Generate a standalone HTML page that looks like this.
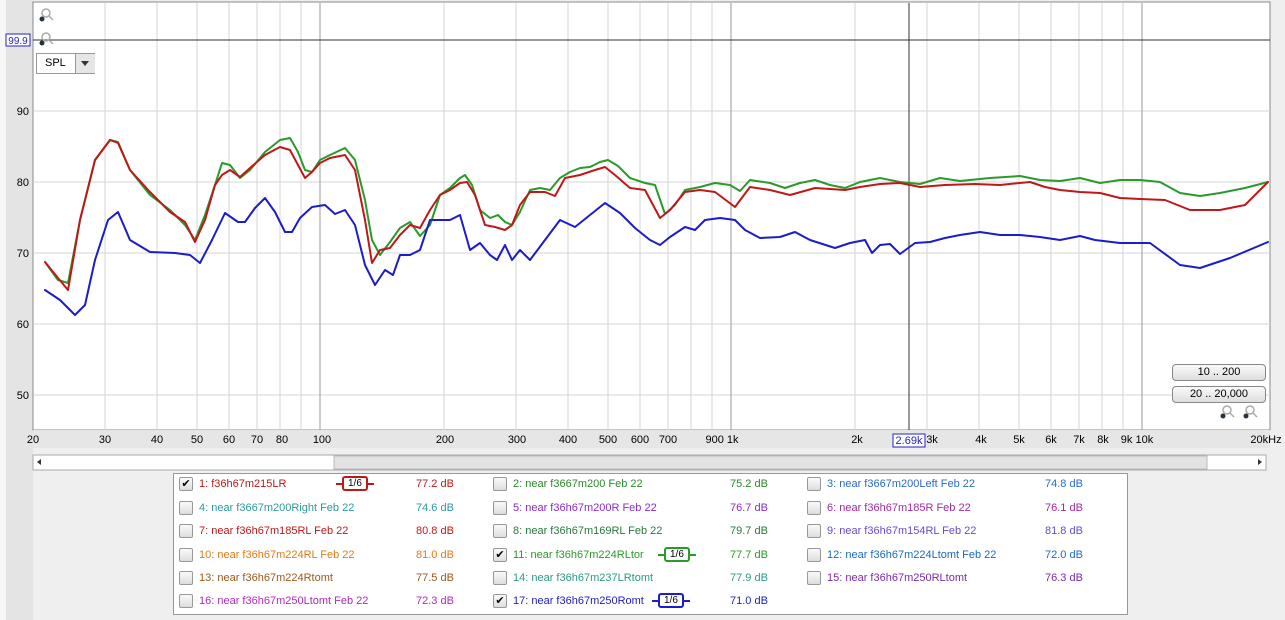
<!DOCTYPE html>
<html><head><meta charset="utf-8"><style>
body{margin:0;width:1285px;height:620px;overflow:hidden;background:#efefef;font-family:"Liberation Sans",sans-serif;font-size:11px;position:relative}
.a{position:absolute}
.lg{position:absolute;left:173px;top:473px;width:953px;height:140px;background:#fff;border:1px solid #999}
.r{position:absolute;white-space:nowrap;font-size:11px}
.cb{position:absolute;width:12px;height:12px;border:1px solid #999;border-radius:2px;background:linear-gradient(#fafafa,#ddd);font-size:11px;line-height:12px;text-align:center;color:#000}
.btn{position:absolute;left:1172px;width:92px;height:15px;border:1px solid #888;border-radius:4px;background:linear-gradient(#fafafa,#ddd);text-align:center;font-size:11px;line-height:15px}
.six{display:inline-block;border:2px solid;border-radius:3px;padding:0 4px;font-size:10px;line-height:11px;position:relative;color:#000}
.six:before,.six:after{content:"";position:absolute;top:5px;width:6px;border-top:2px solid;border-color:inherit}
.six:before{left:-8px}.six:after{right:-8px}
</style></head><body>
<div class="a" style="left:0;top:0;width:33px;height:620px;background:#e4e4e4"></div>
<div class="a" style="left:0;top:0;width:6px;height:620px;background:#f7f7f7"></div>
<svg class="a" style="left:0;top:0" width="1285" height="620">
<rect x="33" y="2" width="1237" height="428" fill="#fff" stroke="#888"/>
<g stroke="#d6d6d6" stroke-width="1">
<path d="M105 3V430M157 3V430M197 3V430M229 3V430M257 3V430M280 3V430M301 3V430M444 3V430M516 3V430M568 3V430M608 3V430M640 3V430M668 3V430M691 3V430M712 3V430M855 3V430M927 3V430M979 3V430M1019 3V430M1051 3V430M1079 3V430M1102 3V430M1123 3V430"/>
<path d="M33 111H1270M33 182H1270M33 253H1270M33 324H1270M33 395H1270"/>
</g>
<path d="M320 3V430M731 3V430M1142 3V430" stroke="#999"/>
<path d="M33 40H1270M909 3V430" stroke="#333"/>
<rect x="33" y="430" width="1237" height="18" fill="#e6e6e6"/>
<g fill="none" stroke-width="2" stroke-linejoin="round" stroke-linecap="round">
<polyline stroke="#2a9a2a" points="45,262 58,280 68,283 80,220 95,160 110,140 118,142 130,170 150,195 170,210 185,225 195,240 205,215 215,185 222,163 230,165 240,178 250,170 265,152 280,140 290,138 298,152 305,170 312,172 320,160 330,155 345,148 355,160 365,200 372,240 380,255 390,242 400,228 410,222 420,236 430,225 440,195 450,188 460,178 465,175 472,185 480,210 490,218 498,215 505,222 512,225 520,212 530,190 540,188 550,190 560,178 570,172 580,168 590,167 600,162 608,160 618,166 630,178 645,183 655,185 665,214 675,205 685,190 700,187 715,183 730,185 740,191 750,180 770,183 785,188 800,183 815,180 830,185 845,188 860,182 880,178 900,182 920,184 940,178 960,181 990,178 1020,176 1040,180 1060,181 1080,178 1100,183 1120,180 1140,180 1160,182 1180,193 1200,196 1220,193 1245,188 1268,182"/>
<polyline stroke="#c01818" points="45,262 58,278 68,290 80,220 95,160 110,140 118,143 130,170 150,192 170,212 185,222 195,242 205,220 215,185 222,175 230,170 240,177 250,168 265,155 280,147 290,150 298,165 305,178 312,172 320,163 330,158 345,155 355,170 365,220 372,263 380,250 390,248 400,235 410,225 420,228 430,210 440,195 450,190 460,183 467,182 475,195 485,225 495,227 505,230 512,225 520,205 530,192 545,192 555,196 565,178 580,175 595,170 605,167 615,175 630,188 645,190 660,218 670,210 685,192 700,190 715,192 735,207 750,187 770,190 790,195 815,188 845,190 860,187 880,184 900,183 920,187 945,185 975,184 1000,185 1030,182 1045,187 1060,190 1080,192 1100,193 1120,198 1140,199 1165,200 1190,210 1200,210 1220,210 1245,205 1268,182"/>
<polyline stroke="#1c1cc8" points="45,290 60,300 75,315 85,305 95,260 108,220 118,212 130,240 150,252 175,253 190,255 200,263 212,240 225,213 238,222 245,222 255,208 265,198 275,212 285,232 292,232 300,218 312,207 325,205 335,214 345,210 355,225 365,265 375,285 385,270 393,275 400,255 410,255 420,250 430,220 440,220 450,220 460,215 470,250 480,243 490,255 497,260 505,245 512,260 520,250 530,260 545,240 560,220 575,227 590,215 605,203 620,213 635,228 650,240 660,245 670,237 685,227 695,230 705,220 720,218 735,220 745,230 760,238 780,237 795,232 810,240 835,248 850,243 865,240 872,253 880,245 890,244 900,254 915,243 930,242 945,238 960,235 980,232 1000,235 1020,235 1040,237 1060,240 1080,236 1095,240 1120,243 1150,243 1180,265 1200,268 1230,258 1268,242"/>
</g>
<g font-family="Liberation Sans" font-size="11" fill="#000" text-anchor="end">
<text x="29" y="115">90</text><text x="29" y="186">80</text><text x="29" y="257">70</text><text x="29" y="328">60</text><text x="29" y="399">50</text>
</g>
<g font-family="Liberation Sans" font-size="11" fill="#000" text-anchor="middle">
<text x="33" y="443">20</text><text x="105" y="443">30</text><text x="157" y="443">40</text><text x="197" y="443">50</text><text x="229" y="443">60</text><text x="257" y="443">70</text><text x="282" y="443">80</text><text x="322" y="443">100</text><text x="445" y="443">200</text><text x="517" y="443">300</text><text x="568" y="443">400</text><text x="608" y="443">500</text><text x="640" y="443">600</text><text x="668" y="443">700</text><text x="722" y="443">900 1k</text><text x="857" y="443">2k</text><text x="932" y="443">3k</text><text x="981" y="443">4k</text><text x="1019" y="443">5k</text><text x="1051" y="443">6k</text><text x="1079" y="443">7k</text><text x="1103" y="443">8k</text><text x="1137" y="443">9k 10k</text><text x="1266" y="443">20kHz</text>
</g>
<rect x="893" y="434" width="32" height="13" fill="#fff" stroke="#22c"/>
<text x="909" y="444" font-family="Liberation Sans" font-size="11" fill="#22c" text-anchor="middle">2.69k</text>
<rect x="6" y="34" width="24" height="12" fill="#fff" stroke="#22c"/>
<text x="18" y="44" font-family="Liberation Sans" font-size="10" fill="#22c" text-anchor="middle">99.9</text>
<g fill="none" stroke="#aaa" stroke-width="1.5">
<circle cx="46" cy="13" r="4"/><path d="M49 16l4 4"/>
<circle cx="46" cy="37" r="4"/><path d="M49 40l4 4"/>
<circle cx="1227" cy="410" r="4"/><path d="M1230 413l4 4"/>
<circle cx="1250" cy="410" r="4"/><path d="M1253 413l4 4"/>
</g>
<g fill="#234">
<circle cx="42" cy="19" r="2.5"/><circle cx="42" cy="43" r="2.5"/><circle cx="1223" cy="416" r="2.5"/><circle cx="1246" cy="416" r="2.5"/>
</g>
<rect x="33" y="455" width="1233" height="15" fill="#fff" stroke="#aaa"/>
<rect x="334" y="456" width="873" height="13" fill="#e2e2e2" stroke="#bbb"/>
<path d="M37 462l4-3v6z" fill="#333"/><path d="M1258 459l4 3-4 3z" fill="#333"/>
</svg>
<div class="a" style="left:36px;top:53px;width:57px;height:19px;background:#fff;border:1px solid #999"><span style="position:absolute;left:8px;top:3px">SPL</span><span style="position:absolute;left:38px;top:0;width:19px;height:19px;background:#e6e6e6;border-left:1px solid #999"></span><span style="position:absolute;left:44px;top:7px;border:4px solid transparent;border-top:5px solid #333"></span></div>
<div class="btn" style="top:364px">10 .. 200</div>
<div class="btn" style="top:386px">20 .. 20,000</div>
<div class="lg">
<div class="cb" style="left:5px;top:3px">✔</div><div class="r" style="left:25px;top:4px;color:#c01818">1: f36h67m215LR</div><div class="r" style="left:168px;top:2px"><span class="six" style="border-color:#c01818">1/6</span></div><div class="r" style="left:242px;top:4px;color:#c01818">77.2 dB</div>
<div class="cb" style="left:319px;top:3px"></div><div class="r" style="left:339px;top:4px;color:#2a8a2a">2: near f3667m200 Feb 22</div><div class="r" style="left:556px;top:4px;color:#2a8a2a">75.2 dB</div>
<div class="cb" style="left:633px;top:3px"></div><div class="r" style="left:653px;top:4px;color:#2a6ac8">3: near f3667m200Left Feb 22</div><div class="r" style="left:871px;top:4px;color:#2a6ac8">74.8 dB</div>

<div class="cb" style="left:5px;top:27px"></div><div class="r" style="left:25px;top:28px;color:#2a9a9a">4: near f3667m200Right Feb 22</div><div class="r" style="left:242px;top:28px;color:#2a9a9a">74.6 dB</div>
<div class="cb" style="left:319px;top:27px"></div><div class="r" style="left:339px;top:28px;color:#8a2ad0">5: near f36h67m200R Feb 22</div><div class="r" style="left:556px;top:28px;color:#8a2ad0">76.7 dB</div>
<div class="cb" style="left:633px;top:27px"></div><div class="r" style="left:653px;top:28px;color:#a02aa0">6: near f36h67m185R Feb 22</div><div class="r" style="left:871px;top:28px;color:#a02aa0">76.1 dB</div>

<div class="cb" style="left:5px;top:50px"></div><div class="r" style="left:25px;top:51px;color:#c01818">7: near f36h67m185RL Feb 22</div><div class="r" style="left:242px;top:51px;color:#c01818">80.8 dB</div>
<div class="cb" style="left:319px;top:50px"></div><div class="r" style="left:339px;top:51px;color:#2a7a3a">8: near f36h67m169RL Feb 22</div><div class="r" style="left:556px;top:51px;color:#2a7a3a">79.7 dB</div>
<div class="cb" style="left:633px;top:50px"></div><div class="r" style="left:653px;top:51px;color:#6a4ad0">9: near f36h67m154RL Feb 22</div><div class="r" style="left:871px;top:51px;color:#6a4ad0">81.8 dB</div>

<div class="cb" style="left:5px;top:74px"></div><div class="r" style="left:25px;top:75px;color:#e07a1a">10: near f36h67m224RL Feb 22</div><div class="r" style="left:242px;top:75px;color:#e07a1a">81.0 dB</div>
<div class="cb" style="left:319px;top:74px">✔</div><div class="r" style="left:339px;top:75px;color:#2a9a2a">11: near f36h67m224RLtor</div><div class="r" style="left:490px;top:73px"><span class="six" style="border-color:#2a9a2a">1/6</span></div><div class="r" style="left:556px;top:75px;color:#2a9a2a">77.7 dB</div>
<div class="cb" style="left:633px;top:74px"></div><div class="r" style="left:653px;top:75px;color:#1a6ac0">12: near f36h67m224Ltomt Feb 22</div><div class="r" style="left:871px;top:75px;color:#1a6ac0">72.0 dB</div>

<div class="cb" style="left:5px;top:97px"></div><div class="r" style="left:25px;top:98px;color:#9a5a1a">13: near f36h67m224Rtomt</div><div class="r" style="left:242px;top:98px;color:#9a5a1a">77.5 dB</div>
<div class="cb" style="left:319px;top:97px"></div><div class="r" style="left:339px;top:98px;color:#2a9a8a">14: near f36h67m237LRtomt</div><div class="r" style="left:556px;top:98px;color:#2a9a8a">77.9 dB</div>
<div class="cb" style="left:633px;top:97px"></div><div class="r" style="left:653px;top:98px;color:#7a2ab0">15: near f36h67m250RLtomt</div><div class="r" style="left:871px;top:98px;color:#7a2ab0">76.3 dB</div>

<div class="cb" style="left:5px;top:120px"></div><div class="r" style="left:25px;top:121px;color:#b02ac0">16: near f36h67m250Ltomt Feb 22</div><div class="r" style="left:242px;top:121px;color:#b02ac0">72.3 dB</div>
<div class="cb" style="left:319px;top:120px">✔</div><div class="r" style="left:339px;top:121px;color:#1c1cc8">17: near f36h67m250Romt</div><div class="r" style="left:484px;top:119px"><span class="six" style="border-color:#1c1cc8">1/6</span></div><div class="r" style="left:556px;top:121px;color:#1c1cc8">71.0 dB</div>
</div>
</body></html>
